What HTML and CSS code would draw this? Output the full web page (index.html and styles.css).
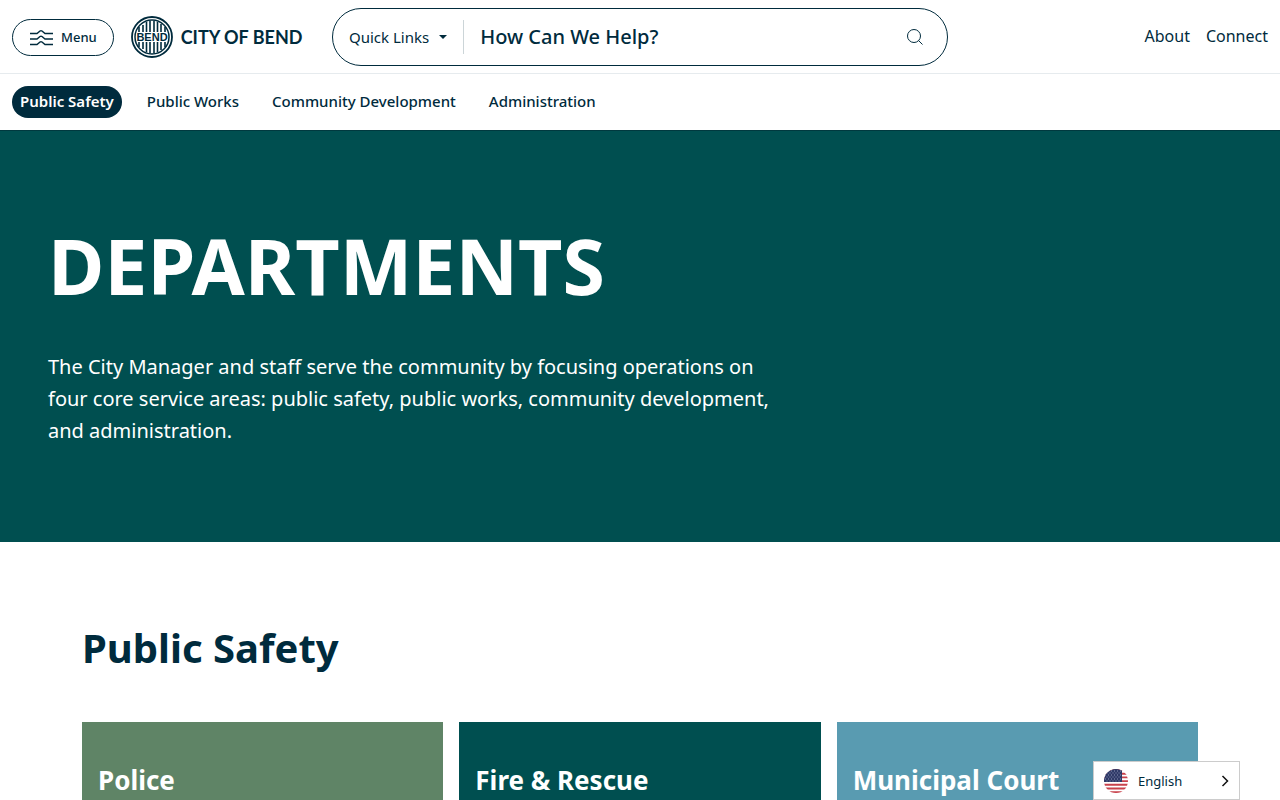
FILE: index.html
```
<!DOCTYPE html>
<html lang="en">

<head>
    <meta charset="UTF-8">
    <meta name="viewport" content="width=device-width, initial-scale=1">
    <title>Departments | City of Bend</title>
    <link rel="stylesheet" href="styles.css">
</head>

<body>
    <header class="header">
        <div class="top-bar">
            <div class="top-left">
                <button class="menu-btn" type="button">
                    <svg width="24" height="18" viewBox="0 0 24 18" fill="none" stroke="currentColor" stroke-width="1.5" aria-hidden="true">
                        <path d="M1 5.500h7l3-2.500q1-.7 2 0l3 2.500h8" />
                        <path d="M1 11h7l3-2.500q1-.7 2 0l3 2.500h8" />
                        <path d="M1 16.500h7l3-2.500q1-.7 2 0l3 2.500h8" />
                    </svg>
                    Menu
                </button>
                <a class="logo" href="#">
                    <svg width="42" height="42" viewBox="0 0 42 42" aria-hidden="true">
                        <circle cx="21" cy="21" r="20" fill="none" stroke="currentColor" stroke-width="1.800" />
                        <circle cx="21" cy="21" r="17" fill="none" stroke="currentColor" stroke-width="1.500" />
                        <g stroke="currentColor" stroke-width="1.600">
                            <path d="M8 11v5M8 26v5M12 9v7M12 26v7M15.500 6v10M15.500 26v10M19 5v11M19 26v11M23 5v11M23 26v11M26.500 6v10M26.500 26v10M30 8v8M30 26v8M34 11v5M34 26v5" />
                        </g>
                        <text class="logo-mark" x="21" y="25" text-anchor="middle">BEND</text>
                    </svg>
                    <span>CITY OF BEND</span>
                </a>
            </div>
            <form class="search">
                <button class="quick-links" type="button">Quick Links</button>
                <input class="search-input" type="text" placeholder="How Can We Help?" aria-label="Search">
                <button class="search-btn" type="submit" aria-label="Submit search">
                    <svg width="16" height="16" viewBox="0 0 16 16" fill="none" stroke="currentColor" aria-hidden="true">
                        <circle cx="7" cy="7" r="6.500" />
                        <path d="M11.500 11.500l4 4" />
                    </svg>
                </button>
            </form>
            <nav class="top-links">
                <a href="#">About</a>
                <a href="#">Connect</a>
            </nav>
        </div>
        <nav class="sub-nav">
            <a class="active" href="#">Public Safety</a>
            <a href="#">Public Works</a>
            <a href="#">Community Development</a>
            <a href="#">Administration</a>
        </nav>
    </header>

    <section class="hero">
        <h1>DEPARTMENTS</h1>
        <p>The City Manager and staff serve the community by focusing operations on four core service areas: public safety, public works, community development, and administration.</p>
    </section>

    <main class="content">
        <h2>Public Safety</h2>
        <div class="cards">
            <a class="card green" href="#"><h3>Police</h3></a>
            <a class="card teal" href="#"><h3>Fire &amp; Rescue</h3></a>
            <a class="card blue" href="#"><h3>Municipal Court</h3></a>
        </div>
    </main>

    <button class="language" type="button">
        <svg width="24" height="24" viewBox="0 0 24 24" aria-hidden="true">
            <clipPath id="round"><circle cx="12" cy="12" r="12" /></clipPath>
            <g clip-path="url(#round)">
                <path fill="#fff" d="M0 0h24v24H0z" />
                <path stroke="#c8414b" stroke-width="1.900" d="M0 1h24M0 4.700h24M0 8.400h24M0 12.100h24M0 15.800h24M0 19.500h24M0 23.200h24" />
                <path fill="#2f3a68" d="M0 0h18v13H0z" />
                <path stroke="#8d95b5" stroke-dasharray="1 2" d="M1 2h16M2.500 4h15M1 6h16M2.500 8h15M1 10h16M2.500 12h15" />
            </g>
        </svg>
        <span>English</span>
        <svg class="chevron" width="8" height="12" viewBox="0 0 8 12" fill="none" stroke="#111" stroke-width="1.500" aria-hidden="true">
            <path d="M1.500 1l5 5-5 5" />
        </svg>
    </button>
</body>

</html>
```
FILE: styles.css
```
* {
    box-sizing: border-box;
    margin: 0;
    padding: 0;
}

body {
    color: #002b3d;
    background-color: #fff;
    font-family: "Noto Sans", "Open Sans", sans-serif;
    font-size: 15px;
    line-height: 24px;
}

a {
    color: inherit;
    text-decoration: none;
}

button,
input {
    border: 0;
    background: none;
    color: inherit;
    font-family: inherit;
}

button {
    cursor: pointer;
}

.top-bar {
    display: grid;
    grid-template-columns: 1fr 616px 1fr;
    align-items: center;
    padding: 8px 12px 7px;
    border-bottom: 1px solid #e6ebee;
}

.top-left {
    display: flex;
    align-items: center;
    gap: 17px;
}

.menu-btn {
    display: flex;
    align-items: center;
    gap: 8px;
    height: 37px;
    padding: 0 16px;
    border: 1px solid #002b3d;
    border-radius: 20px;
    font-size: 13px;
    font-weight: 500;
}

.logo {
    display: flex;
    align-items: center;
    gap: 8px;
    font-family: Lato, sans-serif;
    font-size: 18px;
    font-weight: bold;
    white-space: nowrap;
}

.logo-mark {
    fill: currentColor;
    font-family: "Liberation Sans Narrow", "Liberation Sans", sans-serif;
    font-size: 11px;
    font-weight: bold;
}

.search {
    display: flex;
    align-items: center;
    height: 58px;
    padding: 0 24px 0 16px;
    border: 1px solid #002b3d;
    border-radius: 29px;
}

.quick-links {
    display: flex;
    align-items: center;
    gap: 10px;
    height: 34px;
    padding-right: 16px;
    border-right: 1px solid #ccd5d8;
    font-size: 15px;
    white-space: nowrap;
}

.quick-links::after {
    content: "";
    border: 4px solid transparent;
    border-top-color: #002b3d;
    border-bottom: 0;
}

.search-input {
    flex: 1;
    min-width: 0;
    height: 40px;
    padding: 0 0 2px 16px;
    font-size: 20px;
    font-weight: 500;
}

.search-input::placeholder {
    color: #002b3d;
    opacity: 1;
}

.search-btn {
    display: flex;
}

.top-links {
    display: flex;
    justify-content: flex-end;
    gap: 16px;
    padding-bottom: 2px;
    font-size: 16px;
}

.sub-nav {
    display: flex;
    align-items: center;
    gap: 17px;
    padding: 12px;
    font-weight: 500;
}

.sub-nav a {
    padding: 3px 8px 5px;
    border-radius: 16px;
}

.sub-nav .active {
    background-color: #002b3d;
    color: #fff;
    font-weight: 600;
}

.hero {
    padding: 95px 48px;
    border-top: 1px solid #00393f;
    background-color: #004f50;
    color: #fff;
}

.hero h1 {
    margin-bottom: 45px;
    font-size: 77px;
    line-height: 80px;
}

.hero p {
    max-width: 740px;
    font-size: 20px;
    line-height: 32px;
}

.content {
    padding: 78px 82px 0;
}

.content h2 {
    margin-bottom: 46px;
    font-size: 40px;
    line-height: 56px;
}

.cards {
    display: grid;
    grid-template-columns: repeat(3, 1fr);
    gap: 16px;
}

.card {
    padding: 40px 16px;
    color: #fff;
}

.card h3 {
    font-size: 26px;
    line-height: 36px;
}

.green {
    background-color: #5f8466;
}

.teal {
    background-color: #004f50;
}

.blue {
    background-color: #599bb1;
}

/* language switcher pinned over the page */
.language {
    position: fixed;
    right: 40px;
    bottom: 0;
    display: flex;
    align-items: center;
    gap: 10px;
    width: 147px;
    height: 39px;
    padding: 0 10px;
    border: 1px solid #ccc;
    background-color: #fff;
    font-size: 13px;
}

.chevron {
    margin-left: auto;
}
```
